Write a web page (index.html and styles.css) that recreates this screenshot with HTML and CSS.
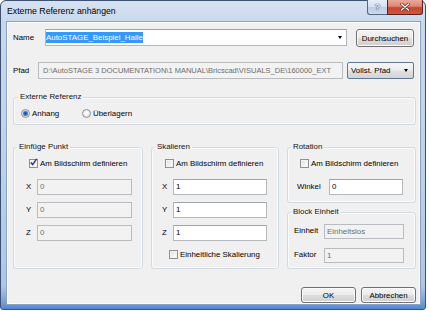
FILE: index.html
```html
<!DOCTYPE html>
<html>
<head>
<meta charset="utf-8">
<link rel="stylesheet" href="styles.css">
</head>
<body>
<div class="window">
  <div class="titlebar">
    <span class="title">Externe Referenz anhängen</span>
    <div class="caption-buttons">
      <span class="cap-btn help">?</span>
      <span class="cap-btn close"><svg width="10" height="8" viewBox="0 0 10 8"><path d="M1.5 1 L8.5 7 M8.5 1 L1.5 7" stroke="#5a1b12" stroke-width="2.6" stroke-linecap="round"/><path d="M1.5 1 L8.5 7 M8.5 1 L1.5 7" stroke="#ffffff" stroke-width="1.5" stroke-linecap="round"/></svg></span>
    </div>
  </div>
  <div class="client">
    <div class="row row-name">
      <span class="lbl lbl-name">Name</span>
      <div class="combo"><span class="sel">AutoSTAGE_Beispiel_Halle</span><span class="arrow"></span></div>
      <div class="btn btn-browse">Durchsuchen</div>
    </div>
    <div class="row row-path">
      <span class="lbl lbl-path">Pfad</span>
      <div class="textbox disabled path">D:\AutoSTAGE 3 DOCUMENTATION\1 MANUAL\Bricscad\VISUALS_DE\160000_EXT</div>
      <div class="dropdown"><span>Vollst. Pfad</span><span class="arrow"></span></div>
    </div>

    <fieldset class="group g-xref">
      <legend>Externe Referenz</legend>
      <div class="gbody xref-body">
        <div class="radio-item first"><span class="radio checked"></span>Anhang</div>
        <div class="radio-item"><span class="radio"></span>Überlagern</div>
      </div>
    </fieldset>

    <div class="groups">
      <fieldset class="group g-insert">
        <legend>Einfüge Punkt</legend>
        <div class="gbody insert-body">
          <div class="check-item ins-check"><span class="checkbox checked"><svg width="9" height="9" viewBox="0 0 9 9"><path d="M1.8 4.4 L3.7 6.6 L7.6 0.8" fill="none" stroke="#2a3f75" stroke-width="1.5"/></svg></span>Am Bildschirm definieren</div>
          <div class="field first-field"><span class="flbl xl">X</span><div class="textbox disabled ins-box">0</div></div>
          <div class="field"><span class="flbl xl">Y</span><div class="textbox disabled ins-box">0</div></div>
          <div class="field"><span class="flbl xl">Z</span><div class="textbox disabled ins-box">0</div></div>
        </div>
      </fieldset>

      <fieldset class="group g-scale">
        <legend>Skalieren</legend>
        <div class="gbody scale-body">
          <div class="check-item sc-check"><span class="checkbox"></span>Am Bildschirm definieren</div>
          <div class="field first-field"><span class="flbl xl">X</span><div class="textbox sc-box">1</div></div>
          <div class="field"><span class="flbl xl">Y</span><div class="textbox sc-box">1</div></div>
          <div class="field"><span class="flbl xl">Z</span><div class="textbox sc-box">1</div></div>
          <div class="check-item uni-check"><span class="checkbox"></span>Einheitliche Skalierung</div>
        </div>
      </fieldset>

      <div class="rightcol">
        <fieldset class="group g-rot">
          <legend>Rotation</legend>
          <div class="gbody rot-body">
            <div class="check-item rot-check"><span class="checkbox"></span>Am Bildschirm definieren</div>
            <div class="field first-field"><span class="flbl wl">Winkel</span><div class="textbox rot-box">0</div></div>
          </div>
        </fieldset>
        <fieldset class="group g-block">
          <legend>Block Einheit</legend>
          <div class="gbody block-body">
            <div class="field bfield"><span class="flbl bl">Einheit</span><div class="textbox disabled blk-box">Einheitslos</div></div>
            <div class="field bfield second"><span class="flbl bl">Faktor</span><div class="textbox disabled blk-box">1</div></div>
          </div>
        </fieldset>
      </div>
    </div>

    <div class="buttons">
      <div class="btn btn-dlg">OK</div>
      <div class="btn btn-dlg">Abbrechen</div>
    </div>
  </div>
</div>
</body>
</html>
```

FILE: styles.css
```css
* { box-sizing: border-box; }
html, body { margin: 0; padding: 0; background: #ffffff; }
body {
  font-family: "Liberation Sans", Arial, sans-serif;
  font-size: 7.9px;
  color: #000;
}

.window {
  width: 426px;
  height: 310px;
  border: 1px solid #3d5273;
  border-radius: 6px 6px 3px 3px;
  background: linear-gradient(to bottom, #d6e2f0 0px, #c8d8ec 22px, #bfd1ea 160px, #aec6e7 285px, #7aa3dc 300px, #4f82cf 309px);
  display: flex;
  flex-direction: column;
  padding: 0 5px 6px 6px;
}

.titlebar {
  height: 21px;
  display: flex;
  align-items: flex-start;
}
.title {
  font-size: 8.7px;
  line-height: 21px;
  color: #000;
}
.caption-buttons {
  margin-left: auto;
  margin-right: -3px;
  margin-top: -1px;
  display: flex;
}
.cap-btn {
  height: 15px;
  display: flex;
  align-items: center;
  justify-content: center;
  border: 1px solid #58687f;
  border-top: none;
}
.help {
  width: 20px;
  border-radius: 0 0 0 3px;
  border-right: none;
  background: linear-gradient(to bottom, #e6eef8 0%, #d5e1f0 50%, #bccde6 51%, #c9d9ee 100%);
  color: #f6f8fb;
  font-weight: bold;
  font-size: 9px;
  text-shadow: 0 0 1px #2b3a52, 0 0 1px #2b3a52;
}
.close {
  width: 36px;
  border-radius: 0 0 3px 0;
  border-color: #5e2119;
  background: linear-gradient(to bottom, #e9a99a 0%, #dc8775 45%, #c7452f 55%, #d0583c 100%);
}

.client {
  flex: 1;
  background: #f0f0f0;
  border: 1px solid #fbfcfd;
  box-shadow: 0 0 0 1px #8aa3c4;
  padding: 6px 3px 0 5px;
  display: flex;
  flex-direction: column;
}

.row {
  display: flex;
  align-items: flex-start;
  padding-right: 2px;
}
.lbl { line-height: 17px; }
.lbl-name { width: 32px; }
.lbl-path { width: 25px; }

.combo {
  flex: 1;
  height: 17px;
  background: #fff;
  border: 1px solid #b2b6bc;
  border-top-color: #9ea2a9;
  display: flex;
  align-items: center;
}
.sel {
  background: #3399ff;
  color: #fff;
  line-height: 11px;
}
.arrow {
  margin-left: auto;
  margin-right: 4px;
  width: 0;
  height: 0;
  border-left: 2.5px solid transparent;
  border-right: 2.5px solid transparent;
  border-top: 3px solid #000;
}

.btn {
  border: 1px solid #707070;
  border-radius: 3px;
  background: linear-gradient(to bottom, #f4f4f4 0%, #ebebeb 48%, #dddddd 52%, #cfcfcf 100%);
  box-shadow: inset 0 0 0 1px #fbfbfb;
  display: flex;
  align-items: center;
  justify-content: center;
  color: #000;
}
.btn-browse {
  margin-left: 9px;
  width: 58px;
  height: 18px;
}

.row-path { margin-top: 15px; }
.textbox {
  height: 16px;
  background: #fff;
  border: 1px solid #b4b8bd;
  border-top-color: #9ea2a9;
  padding-left: 2px;
  line-height: 14px;
  white-space: nowrap;
  overflow: hidden;
}
.textbox.disabled {
  background: #f2f2f2;
  border-color: #b9bbbe;
  color: #6d6d6d;
}
.path {
  flex: 1;
  height: 17px;
  line-height: 15px;
  padding-left: 4px;
  font-size: 7.5px;
}
.dropdown {
  margin-left: 4px;
  width: 67px;
  height: 17px;
  border: 1px solid #5d7898;
  border-radius: 2px;
  background: linear-gradient(to bottom, #f6f6f6 0%, #ececec 48%, #e0e0e0 52%, #d4d4d4 100%);
  display: flex;
  align-items: center;
  padding-left: 3px;
}
.dropdown .arrow { margin-right: 5px; }

.group {
  margin: 0;
  padding: 0;
  min-width: 0;
  border: 1px solid #d3dbe2;
  border-radius: 3px;
  box-shadow: inset 0 0 0 1px #fafbfc;
}
.group legend {
  margin-left: 4px;
  padding: 0 2px;
  line-height: 12px;
  font-size: 7.9px;
  color: #111;
}
.g-xref { margin-top: 12px; }
.g-xref legend { margin-left: 4px; }
.xref-body {
  display: flex;
  padding: 4px 0 4px 7px;
}
.radio-item {
  display: flex;
  align-items: center;
  height: 13px;
  line-height: 13px;
}
.radio-item.first { width: 61px; }
.radio {
  width: 9px;
  height: 9px;
  margin-right: 2px;
  border-radius: 50%;
  border: 1px solid #8d9196;
  background: radial-gradient(circle at 50% 40%, #ffffff 0, #eaeaea 60%, #d2d2d2 100%);
}
.radio.checked {
  background: radial-gradient(circle at 50% 50%, #1d4c88 0, #2a6ab2 1.4px, #5ea0e0 2.4px, #e8eef6 3.2px, #dcdcdc 100%);
}

.groups {
  margin-top: 16px;
  display: grid;
  grid-template-columns: 130px 128px 129px;
  column-gap: 8px;
  align-items: stretch;
}
.g-insert legend, .g-scale legend, .g-rot legend, .g-block legend { margin-left: 3px; }

.check-item {
  display: flex;
  align-items: center;
  height: 13px;
  line-height: 13px;
}
.checkbox {
  width: 9px;
  height: 9px;
  margin-right: 2px;
  border: 1px solid #8d9196;
  background: linear-gradient(135deg, #dcdcdc 0%, #f3f3f3 60%, #ffffff 100%);
  box-shadow: inset 0 0 0 1px #f4f4f4;
  position: relative;
  flex: none;
}
.checkbox svg {
  position: absolute;
  left: -1px;
  top: -2px;
}

.field {
  display: flex;
  align-items: center;
  margin-top: 7px;
}
.field.first-field { margin-top: 9px; }
.flbl { line-height: 16px; }
.xl { width: 11px; }
.wl { width: 32px; }
.bl { width: 30px; }

.insert-body { padding: 4px 0 0 12px; }
.ins-check { margin-left: 3px; }
.ins-box { width: 95px; }

.scale-body { padding: 4px 0 0 10px; }
.sc-check { margin-left: 3px; }
.sc-box { width: 94px; }
.uni-check { margin-top: 7px; margin-left: 7px; }

.rightcol {
  display: flex;
  flex-direction: column;
}
.rot-body { padding: 4px 0 7px 9px; }
.rot-check { margin-left: 3px; }
.rot-box { width: 74px; }

.g-block { margin-top: 3px; }
.block-body { padding: 5px 0 5px 6px; }
.bfield { margin-top: 0; }
.bfield.second { margin-top: 8px; }
.blk-box { width: 80px; height: 15px; line-height: 13px; }

.buttons {
  margin-top: 18px;
  display: flex;
  justify-content: flex-end;
  gap: 5px;
}
.btn-dlg {
  width: 55px;
  height: 16px;
}
```
